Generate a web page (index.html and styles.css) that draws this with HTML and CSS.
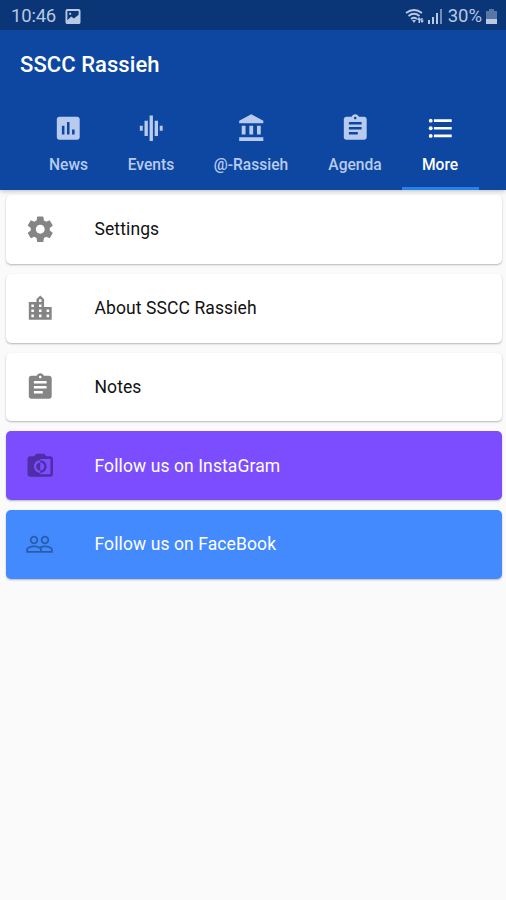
FILE: index.html
```html
<!DOCTYPE html>
<html lang="en">
<head>
<meta charset="utf-8">
<title>SSCC Rassieh</title>
<link rel="stylesheet" href="styles.css">
</head>
<body>
<header class="header">
  <div class="status">
    <span class="clock">10:46</span>
    <svg class="shot" viewBox="0 0 16 16"><path fill-rule="evenodd" d="M2 0h12a2 2 0 0 1 2 2v12a2 2 0 0 1-2 2H2a2 2 0 0 1-2-2V2a2 2 0 0 1 2-2zM2 2v10l4-4 3 2 5-4V2zM4 4h2v2H4z"/></svg>
    <svg class="wifi" viewBox="0 0 20 17"><g fill="none" stroke="currentColor" stroke-width="1.800"><path d="M1 5Q9 -1 17 5M3.500 8Q9 3.500 14.500 8M6 11Q9 8.500 12 11"/></g><path d="M7 12h4l-2 3zM14 9l2.500 3h-1.500v3h-1.500v-3H12zM17 15l-2-2.500h1.300V10h1.400v2.500H19z"/></svg>
    <svg class="signal" viewBox="0 0 14 15"><path d="M0 11h2v4H0zM4 8h2v7H4zM8 4h2v11H8z"/><path opacity=".6" d="M12 0h2v15h-2z"/></svg>
    <span class="percent">30%</span>
    <svg class="battery" viewBox="0 0 11 15"><path opacity=".45" d="M3 0h5v2h3v9H0V2h3z"/><path d="M0 10h11v5H0z"/></svg>
  </div>
  <h1 class="title">SSCC Rassieh</h1>
  <nav class="tabs">
    <div class="tab"><svg class="icon" viewBox="0 0 24 24"><path d="M19 3H5c-1.100 0-2 .9-2 2v14c0 1.100.9 2 2 2h14c1.100 0 2-.9 2-2V5c0-1.100-.9-2-2-2zM9 17H7v-7h2v7zm4 0h-2V7h2v10zm4 0h-2v-4h2v4z"/></svg><span>News</span></div>
    <div class="tab"><svg class="icon" viewBox="0 0 24 24"><path d="M6.700 18h2.600V6H6.700v12zm4 4h2.600V2h-2.600v20zM3 14h2.300v-4H3v4zm11.700 4h2.600V6h-2.600v12zm4-8v4H21v-4h-2.300z"/></svg><span>Events</span></div>
    <div class="tab"><svg class="icon" viewBox="0 0 24 24"><path d="M4.500 10v7h3v-7h-3zm6 0v7h3v-7h-3zM2.500 22h19v-3h-19v3zm14-12v7h3v-7h-3zM12 1L2.500 6v2h19V6L12 1z"/></svg><span>@-Rassieh</span></div>
    <div class="tab"><svg class="icon" viewBox="0 0 24 24"><path d="M19 3h-4.180C14.400 1.840 13.300 1 12 1c-1.300 0-2.400.84-2.820 2H5c-1.100 0-2 .9-2 2v14c0 1.100.9 2 2 2h14c1.100 0 2-.9 2-2V5c0-1.100-.9-2-2-2zm-7 0c.55 0 1 .45 1 1s-.45 1-1 1-1-.45-1-1 .45-1 1-1zm2 14H7v-2h7v2zm3-4H7v-2h10v2zm0-4H7V7h10v2z"/></svg><span>Agenda</span></div>
    <div class="tab active"><svg class="icon" viewBox="0 0 24 24"><path d="M7 5h14v2H7zM7 11h14v2H7zM7 17h14v2H7z"/><circle cx="4.500" cy="6" r="1.500"/><circle cx="4.500" cy="12" r="1.500"/><circle cx="4.500" cy="18" r="1.500"/></svg><span>More</span></div>
  </nav>
</header>
<main class="list">
  <div class="card"><svg class="icon" viewBox="0 0 24 24"><path d="M19.430 12.980c.04-.32.07-.64.07-.98s-.03-.66-.07-.98l2.110-1.650c.19-.15.24-.42.12-.64l-2-3.460c-.12-.22-.39-.3-.61-.22l-2.490 1c-.52-.4-1.080-.73-1.690-.98l-.38-2.650C14.460 2.180 14.250 2 14 2h-4c-.25 0-.46.18-.49.42l-.38 2.650c-.61.25-1.170.59-1.690.98l-2.490-1c-.23-.09-.49 0-.61.22l-2 3.460c-.13.22-.07.49.12.64l2.110 1.650c-.04.32-.07.65-.07.98s.03.66.07.98l-2.110 1.650c-.19.15-.24.42-.12.64l2 3.460c.12.22.39.3.61.22l2.490-1c.52.4 1.080.73 1.690.98l.38 2.650c.03.24.24.42.49.42h4c.25 0 .46-.18.49-.42l.38-2.650c.61-.25 1.170-.59 1.690-.98l2.490 1c.23.09.49 0 .61-.22l2-3.460c.12-.22.07-.49-.12-.64l-2.110-1.650zM12 15.500c-1.930 0-3.500-1.570-3.500-3.500s1.570-3.500 3.500-3.500 3.500 1.570 3.500 3.500-1.570 3.500-3.500 3.500z"/></svg><span>Settings</span></div>
  <div class="card"><svg class="icon" viewBox="0 0 24 24"><path d="M15 11V5l-3-3-3 3v2H3v14h18V11h-6zm-8 8H5v-2h2v2zm0-4H5v-2h2v2zm0-4H5V9h2v2zm6 8h-2v-2h2v2zm0-4h-2v-2h2v2zm0-4h-2V9h2v2zm0-4h-2V5h2v2zm6 12h-2v-2h2v2zm0-4h-2v-2h2v2z"/></svg><span>About SSCC Rassieh</span></div>
  <div class="card"><svg class="icon" viewBox="0 0 24 24"><path d="M19 3h-4.180C14.400 1.840 13.300 1 12 1c-1.300 0-2.400.84-2.820 2H5c-1.100 0-2 .9-2 2v14c0 1.100.9 2 2 2h14c1.100 0 2-.9 2-2V5c0-1.100-.9-2-2-2zm-7 0c.55 0 1 .45 1 1s-.45 1-1 1-1-.45-1-1 .45-1 1-1zm2 14H7v-2h7v2zm3-4H7v-2h10v2zm0-4H7V7h10v2z"/></svg><span>Notes</span></div>
  <div class="card social instagram"><svg class="icon" viewBox="0 0 24 24"><path d="M20 5h-3.200L15 3H9L7.200 5H4c-1.100 0-2 .9-2 2v12c0 1.100.9 2 2 2h16c1.100 0 2-.9 2-2V7c0-1.100-.9-2-2-2zm0 14h-8v-1c-2.800 0-5-2.200-5-5s2.200-5 5-5V7h8v12zm-3-6c0-2.800-2.200-5-5-5v1.800c1.800 0 3.200 1.400 3.200 3.200s-1.400 3.200-3.200 3.200V18c2.800 0 5-2.200 5-5zm-8.200 0c0 1.800 1.400 3.200 3.200 3.200V9.800c-1.800 0-3.200 1.400-3.200 3.200z"/></svg><span>Follow us on InstaGram</span></div>
  <div class="card social facebook"><svg class="icon" viewBox="0 0 24 24"><path d="M16.500 13c-1.200 0-3.070.34-4.500 1-1.430-.67-3.300-1-4.500-1C5.330 13 1 14.080 1 16.250V19h22v-2.750c0-2.170-4.330-3.250-6.500-3.250zm-4 4.500h-10v-1.250c0-.54 2.560-1.750 5-1.750s5 1.210 5 1.750v1.250zm9 0H14v-1.250c0-.46-.2-.86-.52-1.220.88-.3 1.960-.53 3.020-.53 2.440 0 5 1.210 5 1.750v1.250zM7.500 12c1.930 0 3.500-1.570 3.500-3.500S9.430 5 7.500 5 4 6.570 4 8.500 5.570 12 7.500 12zm0-5.500c1.100 0 2 .9 2 2s-.9 2-2 2-2-.9-2-2 .9-2 2-2zm9 5.500c1.930 0 3.500-1.570 3.500-3.500S18.430 5 16.500 5 13 6.570 13 8.500s1.570 3.500 3.500 3.500zm0-5.500c1.100 0 2 .9 2 2s-.9 2-2 2-2-.9-2-2 .9-2 2-2z"/></svg><span>Follow us on FaceBook</span></div>
</main>
</body>
</html>
```
FILE: styles.css
```css
* { box-sizing: border-box; }
body {
  margin: 0;
  min-height: 900px;
  background: #fafafa;
  font-family: Roboto, sans-serif;
}
svg { display: block; flex: none; fill: currentColor; }
.header {
  height: 190px;
  background: #0d47a1;
  box-shadow: 0 1px 5px rgba(0, 0, 0, .25);
}
.status {
  display: flex;
  align-items: center;
  height: 30px;
  padding: 2px 9px 0 11px;
  background: #0a3576;
  color: #b9c8e3;
  font-size: 18.500px;
}
.clock { letter-spacing: -.2px; }
.shot { width: 16px; height: 15px; margin-left: 9px; }
.wifi { width: 20px; height: 17px; margin-left: auto; }
.signal { width: 14px; height: 15px; margin-left: 3px; }
.percent { margin-left: 6px; }
.battery { width: 11px; height: 15px; margin-left: 4px; }
.title {
  height: 70px;
  margin: 0;
  padding-left: 20px;
  color: #fff;
  font-size: 22px;
  font-weight: 500;
  letter-spacing: .06px;
  line-height: 70px;
}
.icon { width: 30.500px; height: 30.500px; }
.tabs {
  display: grid;
  grid-template-columns: 80px 85px 115px 93px 77px;
  height: 90px;
  padding-left: 28.500px;
}
.tab {
  display: flex;
  flex-direction: column;
  align-items: center;
  gap: 10.500px;
  padding-top: 12.500px;
  color: #b8cbef;
  font-size: 15.600px;
  font-weight: 500;
  line-height: 22px;
}
.tab.active {
  color: #fff;
  border-bottom: 3px solid #2382ee;
}
.list {
  display: flex;
  flex-direction: column;
  gap: 10px;
  padding: 5px 4px 0 6px;
}
.card {
  display: flex;
  align-items: center;
  gap: 39.500px;
  height: 68.750px;
  padding-left: 18.500px;
  border-radius: 5px;
  background: #fff;
  box-shadow: 0 1px 2px rgba(0, 0, 0, .28);
  color: #111;
  font-size: 17.500px;
  letter-spacing: .1px;
}
.card .icon { color: #858585; }
.card.social { color: #fff; }
.instagram { background: #7c4dff; }
.facebook { background: #448aff; }
.instagram .icon { color: #4e2da7; }
.facebook .icon { width: 29px; margin-right: 1.500px; color: #285da9; }
```
